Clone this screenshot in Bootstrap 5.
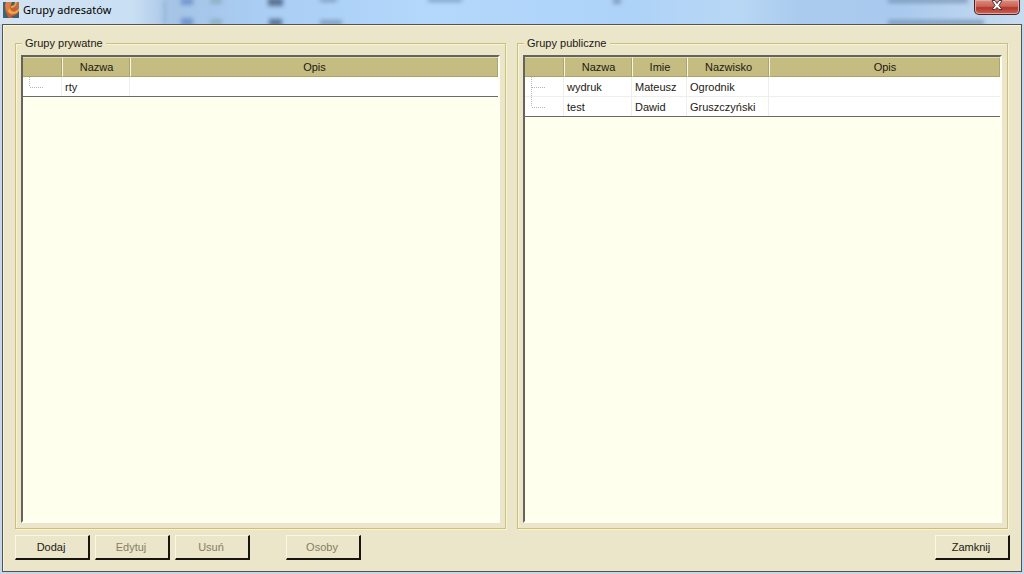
<!DOCTYPE html>
<html lang="pl">
<head>
<meta charset="utf-8">
<meta name="viewport" content="width=device-width, initial-scale=1">
<title>Grupy adresatów</title>
<link href="https://cdn.jsdelivr.net/npm/bootstrap@5.3.0/dist/css/bootstrap.min.css" rel="stylesheet">
<style>
  body { font-family: "Liberation Sans", Arial, sans-serif; font-size: 11px; line-height: 14px; color: #1c1a12; background: #c3d6ec; }
  .titlebar { height: 24px; background: linear-gradient(90deg, #d3e3f2 0, #c9dff3 13%, #a5c4e6 17%, #a9cdf3 25%, #b3d8fc 42%, #aed3f8 62%, #b9d7f5 72%, #aacbee 78%, #a9caee 88%, #c8dcf0 100%); }
  .titlebar h1 { font: 11px/20px "Noto Sans", "Open Sans", sans-serif; color: #000; }
  .app-icon { margin: 2px 0 0 3px; }
  .btn-x { width: 46px; height: 15px; border: 1px solid #4c2428; border-top: 0; border-radius: 0 0 5px 5px; background: linear-gradient(#d98d80 0, #cb6455 45%, #b3362b 55%, #c9645a 100%); box-shadow: inset 0 0 0 1px #e0a8a0; }
  .client { background: #ebe5c9; border: 1px solid #55544c; box-shadow: inset 1px 1px #f7f3dd; padding: 11px 11px; margin: 0 2px 2px; }
  .groups { gap: 11px; margin-right: 2px; }
  .group { border: 1px solid #cabf82; box-shadow: inset 1px 1px #fbf5c8, 1px 1px #fbf5c8; padding: 5px; }
  .groups { margin-left: 1px; }
  .group legend { float: none; width: auto; font-size: 11px; line-height: 14px; margin: 0 0 0 1px; padding: 0 3px; background: #ebe5c9; }
  .well { background: #ffffed; border: 2px solid; border-color: #65635c #fffef4 #fffef4 #65635c; }
  .grid { table-layout: fixed; border-bottom: 1px solid #6b6a66; border-collapse: separate; border-spacing: 0; width: 100%; }
  .grid th { height: 20px; font-weight: 400; text-align: center; padding: 0; background: #c4bc80; border-left: 1px solid #f8f5de; border-top: 1px solid #dfd9b0; border-bottom: 1px solid #a9a26f; box-shadow: inset -1px 0 #aaa373; }
  .grid th:first-child { border-left: 0; }
  .grid td { height: 20px; padding: 0 3px; background: #fff; border-right: 1px solid #eeeeea; border-bottom: 1px solid #eeeeea; white-space: nowrap; }
  .grid td:last-child { border-right: 0; }
  .grid tr:last-child td { height: 19px; border-bottom: 0; }
  .grid .branch { padding: 0 0 0 6px; }
  .branch svg { display: block; }
  .c-tree { width: 39px; } .c-name { width: 68px; } .c-first { width: 55px; } .c-last { width: 82px; }
  .actions { padding: 6px 0 0 1px; }
  .edit-actions { gap: 5px; }
  .people { margin-left: 36px; }
  .btn-old { width: 75px; height: 25px; padding: 0 2px 0 0; font: inherit; color: #1c1a12; background: #ebe5c9; border: 0; border-top: 1px solid #fbf8e2; border-left: 1px solid #fbf8e2; border-right: 2px solid #17150e; border-bottom: 2px solid #17150e; border-radius: 0; }
  .btn-old:disabled { color: #857f61; }
</style>
</head>
<body>
<div class="d-flex flex-column vh-100">
  <header class="titlebar position-relative d-flex align-items-start overflow-hidden flex-shrink-0">
    <svg class="position-absolute top-0 start-0 w-100 h-100" viewBox="0 0 1024 24" preserveAspectRatio="none" aria-hidden="true">
      <defs><filter id="soft" x="-50%" y="-100%" width="200%" height="300%"><feGaussianBlur stdDeviation="2"/></filter></defs>
      <g filter="url(#soft)" opacity=".75">
        <path fill="#5f88c8" d="M181-2h12v7h-12zM181 18h12v8h-12z"/>
        <path fill="#86aab8" d="M210-2h12v6h-12zM210 19h12v6h-12z"/>
        <path fill="#3f5573" d="M268-2h15v8h-15zM269 19h13v7h-13z"/>
        <path fill="#6f8cad" d="M320-2h17v4h-17zM320 20h22v5h-22zM428-2h34v4h-34zM613-2h8v6h-8zM888-2h80v5h-80zM888 20h96v5h-96z"/>
        <path fill="#7fa2c9" d="M163 0h4v24h-4z" opacity=".6"/>
      </g>
    </svg>
    <svg class="app-icon position-relative" width="16" height="16" viewBox="0 0 16 16" aria-hidden="true">
      <path fill="#c65f36" d="M0 0h16v16H0z"/>
      <path fill="#3b6479" d="M0 0h3C1 5 2 11 6 16H0z"/>
      <path fill="#dd8142" d="M3 0h6C6 4 6 9 10 13 4 12 1 6 3 0z"/>
      <path fill="#3b5f72" d="M9 0h3c0 3-2 4-4 4z"/>
      <path fill="#b9703f" d="M12 0h4v6h-4z"/>
      <path fill="#eda94d" d="M7 6c1 5 6 5 9 0v3c-3 4-9 4-11 0z"/>
      <path fill="#f0a34a" d="M8 6c3 0 5-2 6-6h-2c0 3-2 4-4 4z"/>
      <path fill="#3b5f72" d="M8 14c4 0 7-2 8-5v7h-6z"/>
    </svg>
    <h1 class="position-relative m-0 ms-1">Grupy adresatów</h1>
    <button class="btn-x position-relative ms-auto me-1 p-0 d-flex justify-content-center" type="button" aria-label="Zamknij okno">
      <svg width="14" height="12" viewBox="0 0 14 12" aria-hidden="true"><path d="M2 .5h3l2 3 2-3h3L9 5.500l3 4H9l-2-2-2 2H2l3-4z" fill="#fff" stroke="#5d3036"/></svg>
    </button>
  </header>

  <main class="client flex-grow-1 d-flex flex-column">
    <div class="groups d-flex flex-grow-1">
      <fieldset class="group col d-flex flex-column">
        <legend>Grupy prywatne</legend>
        <div class="well flex-grow-1">
          <table class="grid">
            <colgroup><col class="c-tree"><col class="c-name"><col></colgroup>
            <thead><tr><th></th><th scope="col">Nazwa</th><th scope="col">Opis</th></tr></thead>
            <tbody>
              <tr><td class="branch"><svg width="16" height="19" aria-hidden="true"><path d="M.5 0v10M1 10.500h13" stroke="#b5b5b2" stroke-dasharray="1 1" fill="none"/></svg></td><td>rty</td><td></td></tr>
            </tbody>
          </table>
        </div>
      </fieldset>
      <fieldset class="group col d-flex flex-column">
        <legend>Grupy publiczne</legend>
        <div class="well flex-grow-1">
          <table class="grid">
            <colgroup><col class="c-tree"><col class="c-name"><col class="c-first"><col class="c-last"><col></colgroup>
            <thead><tr><th></th><th scope="col">Nazwa</th><th scope="col">Imie</th><th scope="col">Nazwisko</th><th scope="col">Opis</th></tr></thead>
            <tbody>
              <tr><td class="branch"><svg width="16" height="19" aria-hidden="true"><path d="M.5 0v19M1 10.500h13" stroke="#b5b5b2" stroke-dasharray="1 1" fill="none"/></svg></td><td>wydruk</td><td>Mateusz</td><td>Ogrodnik</td><td></td></tr>
              <tr><td class="branch"><svg width="16" height="19" aria-hidden="true"><path d="M.5 0v10M1 10.500h13" stroke="#b5b5b2" stroke-dasharray="1 1" fill="none"/></svg></td><td>test</td><td>Dawid</td><td>Gruszczyński</td><td></td></tr>
            </tbody>
          </table>
        </div>
      </fieldset>
    </div>
    <div class="actions d-flex">
      <div class="edit-actions d-flex">
        <button class="btn-old" type="button">Dodaj</button>
        <button class="btn-old" type="button" disabled>Edytuj</button>
        <button class="btn-old" type="button" disabled>Usuń</button>
      </div>
      <button class="btn-old people" type="button" disabled>Osoby</button>
      <button class="btn-old ms-auto" type="button">Zamknij</button>
    </div>
  </main>
</div>
<script src="https://cdn.jsdelivr.net/npm/bootstrap@5.3.0/dist/js/bootstrap.bundle.min.js"></script>
</body>
</html>
